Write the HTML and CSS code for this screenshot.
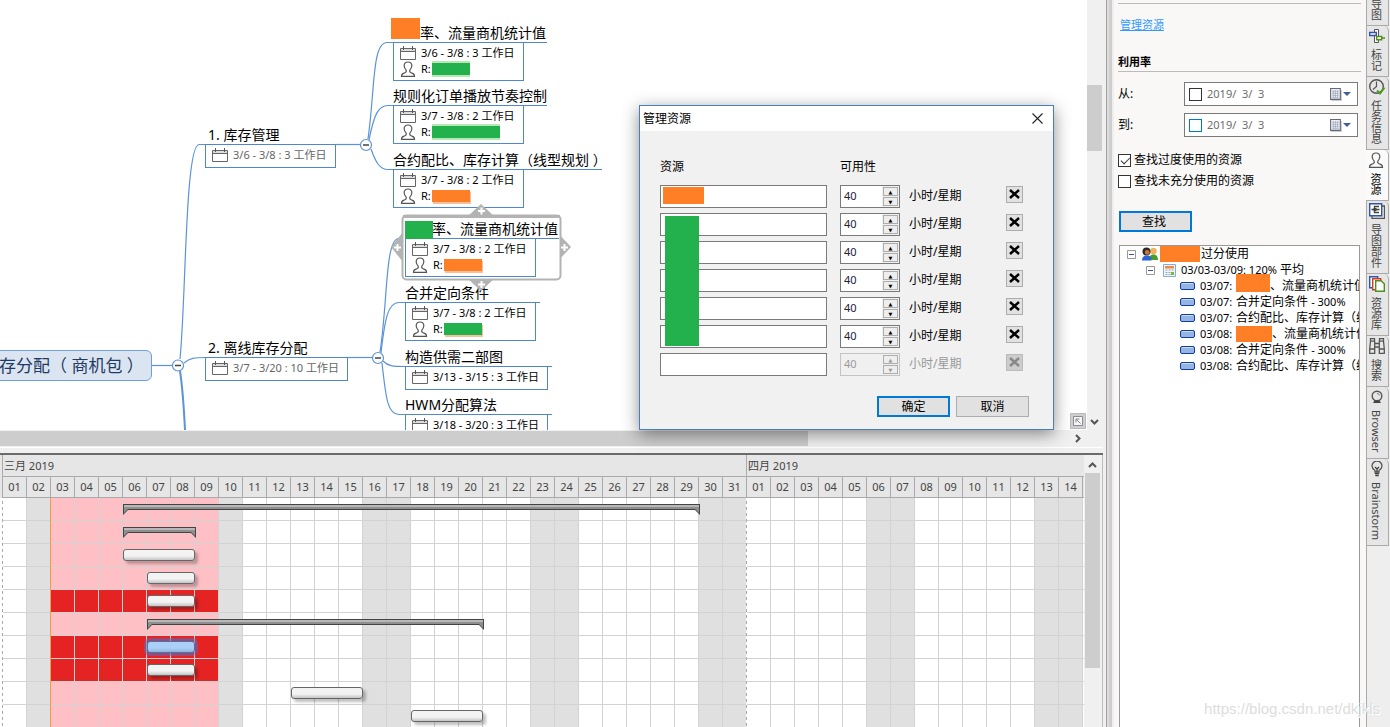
FILE: index.html
```html
<!DOCTYPE html>
<html lang="zh-CN">
<head>
<meta charset="utf-8">
<title>管理资源</title>
<link rel="stylesheet" href="styles.css">
</head>
<body>
<svg class="defs" width="0" height="0" aria-hidden="true">
  <symbol id="i-cal" viewBox="0 0 16 14"><path d="M1 3h14v2H1z" fill="#ddd"/><path d="M.5 2.500h15v11h-15zM.5 5.500h15" fill="none" stroke="#666"/><path d="M3.500 0v4M12.500 0v4" stroke="#555"/></symbol>
  <symbol id="i-man" viewBox="0 0 16 16"><path d="M8 1C5.300 1 4 2.800 4.200 5c.1 2 .8 3 2 4.200C6.800 11 6 11.500 4 12.200 2 12.700 1.500 13.500 1.500 15.300h13c0-1.800-.5-2.600-2.500-3.100-2-.7-2.800-1.200-2.200-3C11 8 11.700 7 11.800 5 12 2.800 10.700 1 8 1z" fill="none" stroke="#555" stroke-width="1.200"/></symbol>
  <symbol id="i-dots" viewBox="0 0 11 12"><rect x="1" y="2" width="10" height="10" fill="#ccc"/><path d="M.5.5h9v10h-9z" fill="#eceef4" stroke="#666a78"/><path d="M2 3h6M2 5h6M2 7h6M2 9h6M3 2v7M5 2v7M7 2v7" stroke="#9aa2b8" stroke-width=".6"/></symbol>
  <symbol id="i-task" viewBox="0 0 16 9"><rect x=".5" y=".5" width="14" height="7" rx="1.500" fill="#95b3e3" stroke="#123f94"/><path d="M2 1.500h11" stroke="#c9dcf7"/></symbol>
</svg>

<div class="app">
  <main class="work">
    <section class="map-pane">
      <div class="map-row">
        <div class="canvas">
          <svg class="links" width="640" height="430" aria-hidden="true">
            <g fill="none" stroke="#5b93d8" stroke-width="1.200">
              <path d="M152 365.500H172"/>
              <path d="M180 359C186 300 185 145 199 144.500H206"/>
              <path d="M184 363C190 358 194 357.500 206 357.500"/>
              <path d="M180 371C183 390 184 410 185 430" stroke-width="2"/>
              <path d="M335 144.500H360"/>
              <path d="M347 357.500H372"/>
              <path d="M368 139C375 90 372 42.500 387 42.500H394"/>
              <path d="M369 140C374 115 378 105.500 388 105.500H394"/>
              <path d="M371 149C376 163 380 169.500 388 169.500H394"/>
              <path d="M380 352C388 300 385 238.500 399 238.500H406"/>
              <path d="M381 353C385 318 388 302.500 399 302.500H406"/>
              <path d="M383 361C388 366 392 366.500 406 366.500"/>
              <path d="M382 363C386 400 388 414.500 399 414.500H406"/>
            </g>
            <g fill="#fff" stroke="#5b93d8" stroke-width="1.200">
              <circle cx="178" cy="365.500" r="5.500"/><circle cx="366" cy="145" r="5.500"/><circle cx="378" cy="358" r="5.500"/>
            </g>
            <path d="M175 365.500h6M363 145h6M375 358h6" stroke="#444" stroke-width="1.500"/>
          </svg>

          <div class="root-topic">存分配（ 商机包 ）</div>

          <div class="node n1"><div class="name">1. 库存管理</div><div class="info dim"><div class="line"><svg class="cal"><use href="#i-cal"/></svg>3/6 - 3/8 : 3 工作日</div></div></div>
          <div class="node n2"><div class="name">2. 离线库存分配</div><div class="info dim"><div class="line"><svg class="cal"><use href="#i-cal"/></svg>3/7 - 3/20 : 10 工作日</div></div></div>

          <div class="node a1"><div class="name"><i class="mask-name orange"></i>率、流量商机统计值</div><div class="info"><div class="line"><svg class="cal"><use href="#i-cal"/></svg>3/6 - 3/8 : 3 工作日</div><div class="line"><svg class="man"><use href="#i-man"/></svg>R:<i class="who green on-green"></i></div></div></div>
          <div class="node a2"><div class="name">规则化订单播放节奏控制</div><div class="info"><div class="line"><svg class="cal"><use href="#i-cal"/></svg>3/7 - 3/8 : 2 工作日</div><div class="line"><svg class="man"><use href="#i-man"/></svg>R:<i class="who wide green on-green"></i></div></div></div>
          <div class="node a3"><div class="name">合约配比、库存计算（线型规划 ）</div><div class="info"><div class="line"><svg class="cal"><use href="#i-cal"/></svg>3/7 - 3/8 : 2 工作日</div><div class="line"><svg class="man"><use href="#i-man"/></svg>R:<i class="who orange on-orange"></i></div></div></div>

          <div class="node b2"><div class="name">合并定向条件</div><div class="info"><div class="line"><svg class="cal"><use href="#i-cal"/></svg>3/7 - 3/8 : 2 工作日</div><div class="line"><svg class="man"><use href="#i-man"/></svg>R:<i class="who green on-orange"></i></div></div></div>
          <div class="selection">
            <svg width="180" height="88" aria-hidden="true">
              <g fill="#b3b3b3"><path d="M76 13L90 0l14 13zM76 74l14 13 14-13zM12 28L0 43l12 15zM166 28l14 15-14 15z"/></g>
              <rect x="11.500" y="11.500" width="158" height="64" rx="4" fill="#fff" stroke="#b3b3b3" stroke-width="2"/>
              <path d="M12 11h157v3H12z" fill="#b3b3b3"/>
              <path d="M87 7h7M90.500 3.500v7M87 80.500h7M90.500 77v7M3 43.500h7M6.500 40v7M170 43.500h7M173.500 40v7" stroke="#fff" stroke-width="2"/>
            </svg>
          </div>
          <div class="node b1"><div class="name"><i class="mask-name low green"></i>率、流量商机统计值</div><div class="info"><div class="line"><svg class="cal"><use href="#i-cal"/></svg>3/7 - 3/8 : 2 工作日</div><div class="line"><svg class="man"><use href="#i-man"/></svg>R:<i class="who orange on-orange"></i></div></div></div>
          <div class="node b3"><div class="name">构造供需二部图</div><div class="info"><div class="line"><svg class="cal"><use href="#i-cal"/></svg>3/13 - 3/15 : 3 工作日</div></div></div>
          <div class="node b4"><div class="name">HWM分配算法</div><div class="info"><div class="line"><svg class="cal"><use href="#i-cal"/></svg>3/18 - 3/20 : 3 工作日</div></div></div>

          <button class="fit" aria-label="适应"><svg width="16" height="16"><path d="M.5.5h15v15H.5z" fill="#cfcfd3" stroke="#bbb"/><path d="M3.500 3.500h9v9h-9z" fill="#f6f6f6" stroke="#8a8a92"/><path d="M6 9.500V6h3.500M6 6l4.500 4.500" fill="none" stroke="#888"/></svg></button>
        </div>
        <div class="vbar map-vbar"><div class="thumb"></div><svg width="16" height="12"><path d="M4 4l3.500 3.500L11 4" fill="none" stroke="#555" stroke-width="2"/></svg></div>
      </div>
      <div class="hbar"><div class="thumb"></div><svg width="12" height="16"><path d="M4 4l3.500 3.500L4 11" fill="none" stroke="#555" stroke-width="2"/></svg></div>
      <div class="split-h"></div>
    </section>

    <section class="gantt-pane">
      <div class="gantt">
        <div class="months"><span class="march">三月 2019</span><span>四月 2019</span></div>
        <div class="days">
          <span>01</span><span>02</span><span>03</span><span>04</span><span>05</span><span>06</span><span>07</span><span>08</span><span>09</span><span>10</span><span>11</span><span>12</span><span>13</span><span>14</span><span>15</span><span>16</span><span>17</span><span>18</span><span>19</span><span>20</span><span>21</span><span>22</span><span>23</span><span>24</span><span>25</span><span>26</span><span>27</span><span>28</span><span>29</span><span>30</span><span>31</span><span>01</span><span>02</span><span>03</span><span>04</span><span>05</span><span>06</span><span>07</span><span>08</span><span>09</span><span>10</span><span>11</span><span>12</span><span>13</span><span>14</span><span></span>
        </div>
        <div class="chart">
          <div class="off" style="grid-column:2"></div>
          <div class="off" style="grid-column:10"></div>
          <div class="off" style="grid-column:16/18"></div>
          <div class="off" style="grid-column:23/25"></div>
          <div class="off" style="grid-column:30/32"></div>
          <div class="off" style="grid-column:37/39"></div>
          <div class="off" style="grid-column:44/46"></div>
          <div class="week"></div>
          <div class="over" style="grid-row:5"></div>
          <div class="over" style="grid-row:7"></div>
          <div class="over" style="grid-row:8"></div>
          <div class="lines"></div>
          <div class="dash" style="grid-column:1"></div>
          <div class="dash" style="grid-column:32"></div>
          <div class="today"></div>
          <div class="sum" style="grid-area:1/6/2/30"></div>
          <div class="sum" style="grid-area:2/6/3/9"></div>
          <div class="bar" style="grid-area:3/6/4/9"></div>
          <div class="bar" style="grid-area:4/7/5/9"></div>
          <div class="bar" style="grid-area:5/7/6/9"></div>
          <div class="sum" style="grid-area:6/7/7/21"></div>
          <div class="bar chosen" style="grid-area:7/7/8/9"></div>
          <div class="bar" style="grid-area:8/7/9/9"></div>
          <div class="bar" style="grid-area:9/13/10/16"></div>
          <div class="bar" style="grid-area:10/18/11/21"></div>
        </div>
      </div>
      <div class="vbar gantt-vbar"><svg width="15" height="18"><path d="M4 12l3.500-3.500L11 12" fill="none" stroke="#555" stroke-width="2"/></svg><div class="thumb"></div></div>
    </section>
  </main>

  <div class="split-v"></div>

  <aside class="panel">
    <div class="top"><a href="#manage">管理资源</a></div>
    <h2>利用率</h2>
    <div class="when">
      <label for="from">从:</label>
      <div class="date"><input type="checkbox" aria-label="启用开始日期"><input id="from" type="text" value="2019/  3/  3"><button aria-label="选择开始日期"><svg width="12" height="13"><use href="#i-dots"/></svg><svg width="8" height="5"><path d="M0 0h8L4 4z" fill="#3f5d96"/></svg></button></div>
    </div>
    <div class="when">
      <label for="to">到:</label>
      <div class="date"><input class="blue" type="checkbox" aria-label="启用结束日期"><input id="to" type="text" value="2019/  3/  3"><button aria-label="选择结束日期"><svg width="12" height="13"><use href="#i-dots"/></svg><svg width="8" height="5"><path d="M0 0h8L4 4z" fill="#3f5d96"/></svg></button></div>
    </div>
    <div class="checks">
      <label><input type="checkbox" checked>查找过度使用的资源</label>
      <label><input type="checkbox">查找未充分使用的资源</label>
    </div>
    <button class="btn primary find">查找</button>
    <div class="tree">
      <div class="row r1"><svg class="tog" width="9" height="9"><path d="M.5.5h8v8h-8z" fill="#fff" stroke="#999"/><path d="M2 4.500h5" stroke="#3b55a5"/></svg>
        <svg class="people" width="16" height="14"><circle cx="11.500" cy="4" r="3.200" fill="#f2b25c"/><path d="M7 13c0-4 2-5.500 4.500-5.500S16 9 16 13z" fill="#4c9b2e"/><circle cx="4.500" cy="4.500" r="4" fill="#2e2a26"/><circle cx="5.200" cy="5.400" r="2.400" fill="#c8743a"/><path d="M0 13.500C0 10 2 8.500 5 8.500s4.500 1.500 4.500 5z" fill="#2a62d8"/></svg>
        <i class="blk w40 orange"></i><span>过分使用</span></div>
      <div class="row r2"><svg class="tog" width="9" height="9"><path d="M.5.5h8v8h-8z" fill="#fff" stroke="#999"/><path d="M2 4.500h5" stroke="#3b55a5"/></svg>
        <svg class="sheet" width="13" height="13"><path d="M.5.5h12v12H.5z" fill="#eef4fc" stroke="#88a8d8"/><path d="M2 2h9v2.500H2z" fill="#f08b3c"/><path d="M2.500 6h2M5.500 6h2M8.500 6h2M2.500 8.500h2M5.500 8.500h2M8.500 8.500h2M2.500 10.500h2M5.500 10.500h2" stroke="#9aa" stroke-width="1.200"/><path d="M8 8h3v3H8z" fill="#7ab83c"/></svg>
        <span><b>03/03-03/09: 120%</b> 平均</span></div>
      <div class="row r3"><svg width="16" height="9"><use href="#i-task"/></svg><b>03/07:</b><i class="blk w34 orange"></i><span>、流量商机统计值</span></div>
      <div class="row r3"><svg width="16" height="9"><use href="#i-task"/></svg><b>03/07:</b><span>合并定向条件 <b>- 300%</b></span></div>
      <div class="row r3"><svg width="16" height="9"><use href="#i-task"/></svg><b>03/07:</b><span>合约配比、库存计算（线</span></div>
      <div class="row r3"><svg width="16" height="9"><use href="#i-task"/></svg><b>03/08:</b><i class="blk w36 orange"></i><span>、流量商机统计值</span></div>
      <div class="row r3"><svg width="16" height="9"><use href="#i-task"/></svg><b>03/08:</b><span>合并定向条件 <b>- 300%</b></span></div>
      <div class="row r3"><svg width="16" height="9"><use href="#i-task"/></svg><b>03/08:</b><span>合约配比、库存计算（线</span></div>
    </div>
  </aside>

  <nav class="tabs">
    <button class="cut"><span>导图</span></button>
    <button><svg width="16" height="16"><path d="M5.500 1.500h4v13h-4z" fill="#fff" stroke="#555"/><path d="M.7 4.500h6.600v3H.7z" fill="#fff" stroke="#2f55a4" stroke-width="1.400"/><path d="M7.700 8.500h5v3.200h-5zM13 10h3" fill="#fff" stroke="#4f8f1e" stroke-width="1.400"/></svg><span>标记</span></button>
    <button><svg width="16" height="16"><circle cx="7.500" cy="7.500" r="6.800" fill="none" stroke="#555" stroke-width="1.400"/><path d="M7.500 2.500v5L4 10.500" fill="none" stroke="#555" stroke-width="1.200"/><path d="M8 11.500l3 3 4.500-6" fill="none" stroke="#4f9a1e" stroke-width="2"/></svg><span>任务信息</span></button>
    <button class="active"><svg width="16" height="16"><use href="#i-man"/></svg><span>资源</span></button>
    <button><svg width="16" height="16"><path d="M13 3h2.500v12.500H3V13" fill="none" stroke="#555" stroke-width="1.300"/><path d="M.7.7h12v12H.7z" fill="#fff" stroke="#2f55a4" stroke-width="1.400"/><path d="M2.500 6.500h8M10 3.500H5.500v6H10" fill="none" stroke="#444" stroke-width="1.400"/><path d="M4.500 5h3v3h-3z" fill="#444"/></svg><span>导图部件</span></button>
    <button><svg width="16" height="16"><path d="M.7.7h8v11h-8z" fill="#fff" stroke="#2f55a4" stroke-width="1.400"/><path d="M3.700 2.700h8v11h-8z" fill="#fff" stroke="#d33a22" stroke-width="1.400"/><path d="M6.700 4.700H12l3.300 3v7.600H6.700z" fill="#fff" stroke="#4f8f1e" stroke-width="1.400"/></svg><span>资源库</span></button>
    <button><svg width="16" height="16"><path d="M1.500.7h4v2.500h-4zM10.500.7h4v2.500h-4zM1.500 3.200L.7 11h5V3.200M14.500 3.200l.8 7.800h-5V3.200M.7 11v4.300h5V11M10.300 11v4.300h5V11M5.700 5.500h4.600M5.700 9h4.600" fill="none" stroke="#555" stroke-width="1.300"/></svg><span>搜索</span></button>
    <button><svg width="16" height="16"><circle cx="8" cy="7" r="4.800" fill="none" stroke="#555" stroke-width="1.400"/><path d="M8 4.500c1.500 0 2.300 1 2.300 2" fill="none" stroke="#777"/><path d="M5.500 11.500h5L12 14H4z" fill="#444"/></svg><span>Browser</span></button>
    <button><svg width="16" height="16"><path d="M6 11V9.500C4 8 3 7 3 5a5 5 0 0 1 10 0c0 2-1 3-3 4.500V11z" fill="none" stroke="#555" stroke-width="1.300"/><path d="M6 6l2 2 2-2M8 8v3M5.800 12.500h4.400M6.300 14.500h3.400" fill="none" stroke="#444" stroke-width="1.300"/></svg><span>Brainstorm</span></button>
  </nav>
</div>

<div class="dialog" role="dialog" aria-labelledby="dlg-title">
  <header><h1 id="dlg-title">管理资源</h1><button class="close" aria-label="关闭"><svg width="11" height="11"><path d="M.5.5l10 10M10.500.5l-10 10" stroke="#222" stroke-width="1.100"/></svg></button></header>
  <div class="body">
    <div class="cols"><span>资源</span><span>可用性</span></div>
    <div class="res"><input type="text" aria-label="资源 1"><div class="spin"><input type="text" value="40" aria-label="可用性 1"><div><button aria-label="增加">▲</button><button aria-label="减少">▼</button></div></div><span class="unit">小时/星期</span><button class="del" aria-label="删除"><svg width="11" height="11"><path d="M1 1l9 8M10 1L1 9" stroke="currentColor" stroke-width="2.500"/></svg></button></div>
    <div class="res"><input type="text" aria-label="资源 2"><div class="spin"><input type="text" value="40" aria-label="可用性 2"><div><button aria-label="增加">▲</button><button aria-label="减少">▼</button></div></div><span class="unit">小时/星期</span><button class="del" aria-label="删除"><svg width="11" height="11"><path d="M1 1l9 8M10 1L1 9" stroke="currentColor" stroke-width="2.500"/></svg></button></div>
    <div class="res"><input type="text" aria-label="资源 3"><div class="spin"><input type="text" value="40" aria-label="可用性 3"><div><button aria-label="增加">▲</button><button aria-label="减少">▼</button></div></div><span class="unit">小时/星期</span><button class="del" aria-label="删除"><svg width="11" height="11"><path d="M1 1l9 8M10 1L1 9" stroke="currentColor" stroke-width="2.500"/></svg></button></div>
    <div class="res"><input type="text" aria-label="资源 4"><div class="spin"><input type="text" value="40" aria-label="可用性 4"><div><button aria-label="增加">▲</button><button aria-label="减少">▼</button></div></div><span class="unit">小时/星期</span><button class="del" aria-label="删除"><svg width="11" height="11"><path d="M1 1l9 8M10 1L1 9" stroke="currentColor" stroke-width="2.500"/></svg></button></div>
    <div class="res"><input type="text" aria-label="资源 5"><div class="spin"><input type="text" value="40" aria-label="可用性 5"><div><button aria-label="增加">▲</button><button aria-label="减少">▼</button></div></div><span class="unit">小时/星期</span><button class="del" aria-label="删除"><svg width="11" height="11"><path d="M1 1l9 8M10 1L1 9" stroke="currentColor" stroke-width="2.500"/></svg></button></div>
    <div class="res"><input type="text" aria-label="资源 6"><div class="spin"><input type="text" value="40" aria-label="可用性 6"><div><button aria-label="增加">▲</button><button aria-label="减少">▼</button></div></div><span class="unit">小时/星期</span><button class="del" aria-label="删除"><svg width="11" height="11"><path d="M1 1l9 8M10 1L1 9" stroke="currentColor" stroke-width="2.500"/></svg></button></div>
    <div class="res disabled"><input type="text" aria-label="资源 7"><div class="spin"><input type="text" value="40" disabled aria-label="可用性 7"><div><button disabled aria-label="增加">▲</button><button disabled aria-label="减少">▼</button></div></div><span class="unit">小时/星期</span><button class="del" disabled aria-label="删除"><svg width="11" height="11"><path d="M1 1l9 8M10 1L1 9" stroke="currentColor" stroke-width="2.500"/></svg></button></div>
    <div class="actions"><button class="btn primary">确定</button><button class="btn">取消</button></div>
    <i class="hide-first orange"></i><i class="hide-rest green"></i>
  </div>
</div>
<div class="watermark">https://blog.csdn.net/dkjkls</div>
</body>
</html>
```
FILE: styles.css
```css
* { box-sizing: border-box; }
body {
  margin: 0;
  font: 12px/16px "Noto Sans", "Noto Sans CJK SC", sans-serif;
  color: #000;
  background: #f0f0f0;
  overflow: hidden;
}
button, input { font: inherit; color: inherit; margin: 0; padding: 0; border: 0; background: none; border-radius: 0; }
svg { display: block; flex: none; }
.defs { position: absolute; }
.orange { background: #ff7f27; }
.green { background: #22b14c; }

.app { display: flex; height: 100vh; }
.work { flex: 1; min-width: 0; display: flex; flex-direction: column; }

/* mind map */
.map-pane { flex: 455 1 0; min-height: 0; display: flex; flex-direction: column; }
.map-row { flex: 1; min-height: 0; display: flex; }
.canvas { flex: 1; position: relative; overflow: hidden; background: #fff; }
.links { position: absolute; left: 0; top: 0; }
.root-topic {
  position: absolute; left: -12px; top: 350px; width: 164px; height: 31px;
  padding-left: 10px; border: 1px solid #6d9fe0; border-radius: 6px;
  background: #dbe5f1; color: #1f3a63; font-size: 17px; line-height: 30px; white-space: nowrap;
}
.node { position: absolute; white-space: nowrap; }
.name { position: relative; height: 21px; line-height: 22px; font-size: 14px; border-bottom: 1px solid #4f87cf; }
.info {
  width: 131px; padding: 2px 6px 3px; border: 1px solid #4f87cf; border-top: 0;
  font-size: 11px;
}
.info .line { display: flex; align-items: center; height: 16px; }
.info.dim { color: #666; }
.cal { width: 16px; height: 14px; margin-right: 5px; }
.man { width: 16px; height: 16px; margin-right: 5px; }
.n1, .n2 { left: 205px; }
.n1 { top: 124px; width: 131px; }
.n2 { top: 337px; width: 143px; }
.n1 .name, .n2 .name { padding-left: 3px; }
.n1 .info, .n2 .info, .b3 .info, .b4 .info { padding-bottom: 4px; }
.n2 .info, .b3 .info, .b4 .info { width: 143px; }
.a1, .a2, .a3 { left: 393px; }
.a1 { top: 22px; width: 154px; }
.a2 { top: 85px; width: 154px; }
.a3 { top: 149px; width: 209px; }
.b1, .b2, .b3, .b4 { left: 405px; }
.b1 { top: 218px; width: 154px; }
.b2 { top: 282px; width: 135px; }
.b3 { top: 346px; width: 147px; }
.b4 { top: 394px; width: 147px; }
.a1 .name, .b1 .name { padding-left: 27px; }
.mask-name { position: absolute; left: -2px; top: -4px; width: 29px; height: 21px; }
.mask-name.low { left: 0; top: 3px; width: 28px; height: 18px; }
.who { width: 38px; height: 12px; margin-left: 1px; }
.who.wide { width: 68px; }
.on-green { box-shadow: 0 2px #b5e8b5, 0 -2px #b5e8b5; }
.on-orange { box-shadow: 1px 2px #f7bf9c; }
.selection { position: absolute; left: 391px; top: 204px; }
.fit { position: absolute; right: 1px; bottom: 1px; }

/* scroll bars and splitters */
.vbar { width: 16px; display: flex; flex-direction: column; background: #f0f0f0; }
.thumb { background: #cdcdcd; }
.map-vbar { margin-right: 3px; justify-content: space-between; }
.map-vbar .thumb { height: 66px; width: 15px; margin-top: 85px; }
.map-vbar svg { margin-bottom: 2px; }
.hbar { height: 17px; display: flex; justify-content: space-between; align-items: stretch; padding: 1px 22px 1px 0; background: #f0f0f0; }
.hbar .thumb { width: 74.5%; }
.split-h { height: 8px; margin-right: 3px; border-top: 1px solid #fff; border-bottom: 2px solid #6b6b6b; background: #f0f0f0; }
.split-v { width: 8px; border-left: 1px solid #a0a0a0; background: linear-gradient(90deg, #ddd 0 2px, #cfcfcf 2px 5px, #eee 5px); }

/* gantt */
.gantt-pane { flex: 272 1 0; min-height: 0; display: flex; margin-right: 3px; border-right: 1px solid #bbb; }
.gantt { flex: 1; min-width: 0; overflow: hidden; display: flex; flex-direction: column; padding-left: 2px; background: #e6e6e6; color: #444; font-size: 11px; }
.months, .days { display: flex; flex: none; }
.months { height: 22px; border-bottom: 1px solid #aaa; }
.months span { padding: 0 1px; border-left: 1px solid #aaa; line-height: 21px; }
.months .march { flex: none; width: 744px; }
.days { height: 21px; border-bottom: 1px solid #aaa; }
.days span { flex: none; width: 24px; border-left: 1px solid #aaa; text-align: center; line-height: 20px; }
.chart {
  flex: 1; min-height: 0; overflow: hidden; margin-left: -2px; padding-left: 2px; background: #fff;
  display: grid; grid-template-columns: repeat(46, 24px); grid-template-rows: repeat(10, 23px);
}
.off { grid-row: 1 / -1; background: #e0e0e0; }
.week { grid-area: 1 / 3 / -1 / 10; background: #ffc0c5; }
.over { grid-column: 3 / 10; background: #e52323; }
.lines {
  grid-area: 1 / 1 / -1 / -1;
  background:
    repeating-linear-gradient(90deg, #d3d3d3 0 1px, transparent 1px 24px),
    repeating-linear-gradient(180deg, transparent 0 22px, #d3d3d3 22px 23px);
}
.dash { grid-row: 1 / -1; width: 1px; background: repeating-linear-gradient(180deg, #fff 0 3px, #aaa 3px 6px); }
.today { grid-area: 1 / 3 / -1 / 4; width: 1px; background: #f59b45; }
.bar {
  height: 12px; margin: 5px -1px 0 1px; border: 1px solid #666; border-radius: 3px;
  background: linear-gradient(#f3f3f3 60%, #c4c4c4); box-shadow: 3px 3px 3px rgba(0, 0, 0, .25);
}
.bar.chosen { border-color: #4a74a8; background: linear-gradient(#aad0f8 60%, #8cb2da); box-shadow: 0 0 0 3px rgba(90, 110, 190, .55); }
.sum, .sum::after { clip-path: polygon(0 0, 100% 0, 100% 11px, calc(100% - 5px) 6px, 5px 6px, 0 11px); }
.sum { height: 11px; margin: 6px -2px 0 1px; padding: 1px; background: #444; }
.sum::after {
  content: ""; display: block; height: 8px; background: linear-gradient(#b8b8b8 0 2px, #8f8f8f 2px);
  clip-path: polygon(0 0, 100% 0, 100% 8px, calc(100% - 4px) 4px, 4px 4px, 0 8px);
}
.gantt-vbar { width: 15px; margin: 0 2px 0 1px; }
.gantt-vbar .thumb { height: 195px; }

/* side panel */
.panel { width: 252px; display: flex; flex-direction: column; padding: 3px 5px 0 4px; background: #f9f8f7; }
.top { border-top: 1px solid #bbb; height: 50px; padding: 13px 2px; font-size: 11px; }
.top a { color: #3399ff; }
.panel h2 { margin: 0 0 10px; height: 19px; font-size: 11px; line-height: 18px; border-bottom: 1px solid #bbb; }
.when { display: flex; justify-content: space-between; align-items: center; margin-bottom: 7px; padding-right: 3px; }
.date { display: flex; align-items: center; width: 174px; height: 24px; padding: 0 6px 0 4px; border: 1px solid #7a7a7a; background: #fff; color: #6d6d6d; font-size: 11px; }
.date input[type="text"] { flex: 1; min-width: 0; margin-left: 5px; white-space: pre; }
.date button { display: flex; align-items: center; gap: 1px; }
input[type="checkbox"] { appearance: none; flex: none; width: 13px; height: 13px; border: 1px solid #333; background: #fff; }
input[type="checkbox"].blue { border-color: #0078d7; }
input[type="checkbox"]:checked::after { content: ""; display: block; width: 8px; height: 4px; margin: 2px 0 0 2px; border: solid #333; border-width: 0 0 1px 1px; transform: rotate(-45deg); }
.checks { display: flex; flex-direction: column; gap: 5px; margin: 8px 0 22px; }
.checks label { display: flex; align-items: center; gap: 3px; }
.btn { width: 73px; height: 21px; border: 1px solid #adadad; background: #e1e1e1; line-height: 18px; }
.btn.primary { border: 2px solid #0078d7; }
.find { margin-left: 1px; padding-right: 3px; }
.tree { flex: 1; overflow: hidden; margin: 13px 1px 0; border: 1px solid #999; border-bottom: 0; background: #fff; }
.row { display: flex; align-items: center; height: 16px; line-height: 18px; white-space: nowrap; }
.row b { font-size: 11px; font-weight: 400; }
.r1 { padding-left: 7px; }
.r1 .people { margin: 0 2px 0 6px; }
.r2 { padding-left: 26px; }
.r2 .sheet { margin: 0 5px 0 8px; }
.r3 { padding-left: 60px; }
.r3 > b { width: 36px; margin-left: 4px; }
.row > * { flex: none; }
.blk { height: 16px; }
.w40 { width: 40px; margin-right: 1px; }
.w34 { width: 34px; height: 18px; align-self: flex-end; margin-bottom: 2px; }
.w36 { width: 36px; }

/* tab rail */
.tabs { width: 24px; padding-right: 1px; border-left: 1px solid #aaa; background: #eee; display: flex; flex-direction: column; }
.tabs button {
  display: flex; flex-direction: column; align-items: center; gap: 5px; padding: 2px 4px 5px 0;
  width: 22px; border: 1px solid #aaa; border-width: 0 1px 1px 0; border-top-right-radius: 5px;
  background: #e6e6e6; color: #444; font-size: 11px; line-height: 14px;
}
.tabs svg { margin-left: 2px; }
.tabs span { writing-mode: vertical-rl; white-space: nowrap; flex: none; }
.tabs .active { margin-left: -1px; width: 23px; background: #fafafa; color: #000; }
.tabs .cut { height: 26px; justify-content: flex-end; overflow: hidden; border-top-right-radius: 0; }

/* dialog */
.dialog { position: absolute; left: 639px; top: 105px; width: 415px; border: 1px solid #4a7ebb; background: #f1f1f1; box-shadow: 0 4px 16px rgba(0, 0, 0, .45); }
.dialog header { display: flex; justify-content: space-between; align-items: center; height: 25px; padding: 0 10px 0 3px; background: #fff; }
.dialog h1 { margin: 0; font-size: 12px; font-weight: 400; }
.body { position: relative; padding: 27px 24px 12px 20px; }
.cols { display: flex; height: 27px; line-height: 18px; }
.cols span:first-child { width: 180px; }
.res { display: flex; align-items: flex-start; height: 28px; }
.res > input { width: 167px; height: 23px; margin-right: 13px; padding: 0 4px; border: 1px solid #7a7a7a; background: #fff; }
.spin { display: flex; width: 60px; height: 23px; border: 1px solid #7a7a7a; background: #fff; font-size: 11px; }
.spin > input { flex: 1; min-width: 0; padding: 0 0 2px 3px; color: #223; }
.spin > div { width: 17px; padding: 1px; display: flex; flex-direction: column; gap: 1px; background: #f0f0f0; }
.spin button { flex: 1; border: 1px solid #adadad; background: #eee; font: 5px/6px "DejaVu Sans", sans-serif; }
.unit { flex: 1; margin-left: 9px; line-height: 21px; }
.del { display: flex; align-items: center; justify-content: center; width: 17px; height: 17px; margin: 1px 6px 0 0; border: 1px solid #adadad; background: #e1e1e1; }
.disabled .spin { border-color: #c4c4c4; background: #f0f0f0; }
.disabled .spin > input, .disabled .unit, .disabled button { color: #999; }
.disabled .del { background: #ccc; border-color: #bbb; color: #888; }
.actions { display: flex; justify-content: flex-end; gap: 6px; margin-top: 15px; }
.hide-first { position: absolute; left: 23px; top: 56px; width: 41px; height: 17px; }
.hide-rest { position: absolute; left: 25px; top: 85px; width: 34px; height: 130px; }
.watermark { position: absolute; right: 10px; bottom: 8px; font: 15px/20px "Liberation Sans", sans-serif; color: #ddd; text-shadow: 1px 1px #fff; }
```
